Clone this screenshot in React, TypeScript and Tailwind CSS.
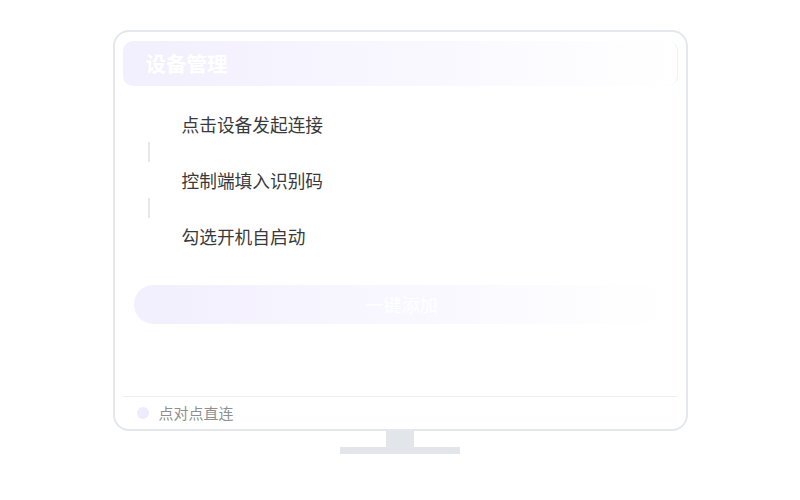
const steps = ['点击设备发起连接', '控制端填入识别码', '勾选开机自启动'];

export default function App() {
  return (
    <div className="flex h-[500px] w-[800px] flex-col items-center bg-white pt-[30px] font-['Noto_Sans_CJK_SC',sans-serif]">
      <div className="flex h-[401px] w-[575px] flex-col rounded-[16px] border-2 border-[#e4e7ec] bg-white">
        <div className="mx-[8px] mt-[9px] flex h-[45px] items-center rounded-[10px] border-r border-[#eef0f3] bg-gradient-to-r from-[#f2effe] to-white pl-[23px]">
          <span className="text-[20.5px] font-bold text-white">设备管理</span>
        </div>

        <div className="mt-[20px] flex flex-col">
          {steps.map((s, i) => (
            <div key={s} className="flex flex-col">
              <div className="flex h-[36px] items-center pl-[67px] text-[17.7px] text-[#3a3a3a]">{s}</div>
              {i < steps.length - 1 && <div className="ml-[33px] h-[20px] w-[2px] bg-[#e6e8ec]" />}
            </div>
          ))}
        </div>

        <button className="ml-[19px] mt-[31px] flex h-[39px] w-[536px] items-center justify-center rounded-full bg-gradient-to-r from-[#f2effe] to-white text-[18px] font-normal text-white">
          一键添加
        </button>

        <div className="mx-[8px] mt-auto flex h-[33px] items-center border-t border-[#eef0f3] pl-[14px]">
          <span className="h-[12px] w-[12px] rounded-full bg-[#efebfd]" />
          <span className="ml-[10px] text-[15px] text-[#909090]">点对点直连</span>
        </div>
      </div>
      <div className="h-[16px] w-[28px] bg-[#e2e5e9]" />
      <div className="h-[7px] w-[120px] bg-[#e2e5e9]" />
    </div>
  );
}
